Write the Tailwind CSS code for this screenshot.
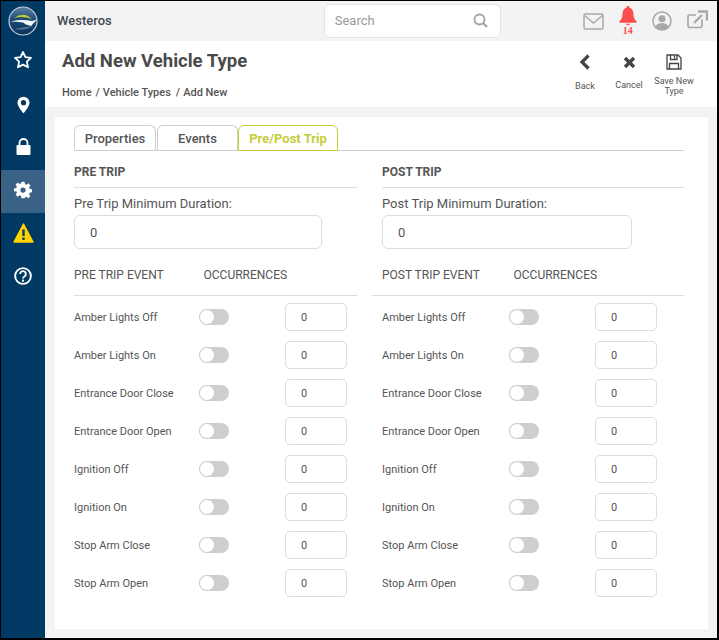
<!DOCTYPE html>
<html><head><meta charset="utf-8"><script src="https://cdn.jsdelivr.net/npm/@tailwindcss/browser@4"></script></head>
<body class="m-0 bg-black">
<div class="w-[719px] h-[640px] overflow-hidden pt-px pl-px pr-[2px] pb-[2px] bg-black font-['Roboto',sans-serif] text-[#555]">
<div class="flex h-full bg-[#f3f3f3]">
<aside class="w-[44px] shrink-0 bg-[#003963] flex flex-col items-center">
  <div class="h-[40px] w-full flex items-center justify-center">
    <svg width="30" height="30" viewBox="0 0 30 30"><defs><linearGradient id="g" x1="0" y1="0" x2="0" y2="1"><stop offset="0" stop-color="#5f83a3"/><stop offset=".45" stop-color="#1c4a74"/><stop offset="1" stop-color="#0b3158"/></linearGradient></defs><circle cx="15" cy="15" r="14" fill="url(#g)" stroke="#c3ced8" stroke-width="1.200"/><path d="M6 12Q16 5 24 13Q15 9.500 6 12Z" fill="#c3c93a"/><path d="M2.500 15.500Q14 13 24 15L29 13.500L23 20L18 18.500L15 16.500Q9 15.500 2.500 15.500Z" fill="#f4f7fa"/><path d="M6 23Q16 25 25 20Q16 21.500 6 23Z" fill="#5d7f9e"/></svg>
  </div>
  <div class="h-[38px] w-full flex items-center justify-center">
    <svg width="20" height="20" viewBox="0 0 20 20"><path d="M10 2l2.400 5.200 5.600.7-4.100 3.800 1.100 5.600L10 14.600l-5 2.700 1.100-5.600L2 7.900l5.600-.7z" fill="none" stroke="#fff" stroke-width="1.800" stroke-linejoin="round"/></svg>
  </div>
  <div class="h-[50px] w-full flex items-center justify-center">
    <svg class="mt-[1px]" width="13" height="18" viewBox="0 0 14 18"><path fill-rule="evenodd" d="M7 0a6.500 6.500 0 0 1 6.500 6.500C13.500 10.500 7 18 7 18S.5 10.500.5 6.500A6.500 6.500 0 0 1 7 0zm0 3.700a2.800 2.800 0 1 0 0 5.600A2.800 2.800 0 0 0 7 3.700z" fill="#fff"/></svg>
  </div>
  <div class="h-[36px] w-full flex items-center justify-center">
    <svg class="mb-[1px]" width="15" height="17" viewBox="0 0 15 17"><path d="M3.500 8V5a4 4 0 0 1 8 0V8" fill="none" stroke="#fff" stroke-width="1.800"/><rect x="0.500" y="7" width="14" height="10" rx="1" fill="#fff"/></svg>
  </div>
  <div class="h-[43px] w-full mt-[5px] shrink-0 bg-[#3a6286] flex items-center justify-center">
    <svg class="mb-[3px]" width="18" height="18" viewBox="0 0 24 24"><path fill="#fff" fill-rule="evenodd" d="M10 1h4l.6 3.100 1.900.8 2.600-1.800 2.800 2.800-1.800 2.600.8 1.900 3.100.6v4l-3.100.6-.8 1.900 1.800 2.600-2.800 2.800-2.600-1.800-1.900.8L14 23h-4l-.6-3.100-1.900-.8-2.600 1.800-2.800-2.800 1.800-2.600-.8-1.900L0 14v-4l3.100-.6.8-1.900L2.100 4.900l2.800-2.800 2.600 1.800 1.900-.8zM12 8.500a3.500 3.500 0 1 0 0 7 3.500 3.500 0 0 0 0-7z"/></svg>
  </div>
  <div class="h-[42px] w-full flex items-center justify-center">
    <svg class="mb-[2px]" width="21" height="20" viewBox="0 0 21 20"><path d="M10.500 1L20 19H1Z" fill="#ffd200" stroke="#ffd200" stroke-width="1.400" stroke-linejoin="round"/><rect x="9.300" y="6.500" width="2.400" height="6.500" fill="#003963"/><rect x="9.300" y="14.500" width="2.400" height="2.400" fill="#003963"/></svg>
  </div>
  <div class="h-[42px] w-full flex items-center justify-center">
    <svg width="18" height="18" viewBox="0 0 19 19"><circle cx="9.500" cy="9.500" r="8.300" fill="none" stroke="#fff" stroke-width="2"/><path d="M6.500 7.400a3 3 0 1 1 4.500 2.600c-1 .6-1.500 1-1.500 2.200" fill="none" stroke="#fff" stroke-width="2"/><rect x="8.400" y="13.300" width="2.200" height="2.200" fill="#fff"/></svg>
  </div>
</aside>
<div class="flex-1 min-w-0 flex flex-col">
  <header class="h-[40px] shrink-0 flex items-center pl-[12px] relative">
    <span class="text-[13px] font-medium text-[#3f4650]">Westeros</span>
    <div class="ml-[212px] mt-[-1px] w-[177px] h-[34px] bg-white border border-[#e3e3e3] rounded-[6px] flex items-center justify-between pl-[10px] pr-[12px]">
      <span class="text-[13px] text-[#9a9a9a]">Search</span>
      <svg width="15" height="15" viewBox="0 0 15 15"><circle cx="6.500" cy="6.500" r="5" fill="none" stroke="#a3a3a3" stroke-width="1.800"/><path d="M10.200 10.200L14 14" stroke="#a3a3a3" stroke-width="2.200"/></svg>
    </div>
    <div class="ml-[82px] flex items-center">
      <svg width="21" height="17" viewBox="0 0 21 17"><rect x="1" y="1" width="19" height="15" rx="1.500" fill="none" stroke="#a8a8a8" stroke-width="1.500"/><path d="M1.500 2.500L10.500 10L19.500 2.500" fill="none" stroke="#a8a8a8" stroke-width="1.500"/></svg>
      <div class="ml-[14px] w-[20px] h-[31px] relative">
        <svg class="absolute left-0 top-0" width="20" height="19" viewBox="0 0 20 21"><path d="M10 0a1.600 1.600 0 0 1 1.600 1.800C14.500 2.600 16 5 16 8c0 5 1.500 7 3.500 9v1.500H.5V17c2-2 3.500-4 3.500-9 0-3 1.500-5.400 4.400-6.200A1.600 1.600 0 0 1 10 0zM7.500 19.500h5a2.500 1.500 0 0 1-5 0z" fill="#ff4d4d"/></svg>
        <span class="absolute left-0 right-0 top-[20px] text-center font-['Liberation_Serif',serif] font-bold text-[10px] leading-[10px] text-[#ff4d4d]">14</span>
      </div>
      <svg class="ml-[14px]" width="20" height="20" viewBox="0 0 20 20"><circle cx="10" cy="10" r="9" fill="none" stroke="#a8a8a8" stroke-width="1.500"/><circle cx="10" cy="7.700" r="3.500" fill="#a8a8a8"/><path d="M3.500 15.500C5 12.500 7.500 12 10 12s5 .5 6.500 3.500A9 9 0 0 1 10 19a9 9 0 0 1-6.500-3.500z" fill="#a8a8a8"/></svg>
      <svg class="ml-[15px] mt-[-3px]" width="21" height="19" viewBox="0 0 21 19"><path d="M15 9.500V16a1.500 1.500 0 0 1-1.500 1.500H2.500A1.500 1.500 0 0 1 1 16V6.500A1.500 1.500 0 0 1 2.500 5H9" fill="none" stroke="#a8a8a8" stroke-width="1.700"/><path d="M7 13L15 5M11 1.500H20V10.500" fill="none" stroke="#a8a8a8" stroke-width="2.400"/></svg>
    </div>
  </header>
  <section class="h-[66px] shrink-0 bg-white flex justify-between pl-[17px] pr-[20px]">
    <div>
      <h1 class="text-[18.500px] leading-[24px] font-bold mt-[8px] text-[#4a4a4a]">Add New Vehicle Type</h1>
      <div class="text-[11px] font-medium leading-[14px] mt-[13px] text-[#555] flex"><span>Home</span><span class="ml-[4px]">/</span><span class="ml-[3px]">Vehicle Types</span><span class="ml-[5px]">/</span><span class="ml-[3px]">Add New</span></div>
    </div>
    <div class="flex items-start text-[9px] leading-[10px] text-center text-[#555]">
      <div class="w-[44px] flex flex-col items-center">
        <svg class="mt-[13px]" width="12" height="16" viewBox="0 0 12 16"><path d="M9.500 1.500L3 8L9.500 14.500" fill="none" stroke="#444" stroke-width="3.200"/></svg>
        <span class="mt-[11px]">Back</span>
      </div>
      <div class="w-[44px] flex flex-col items-center">
        <svg class="mt-[15px]" width="13" height="13" viewBox="0 0 13 13"><path d="M2 2L11 11M11 2L2 11" fill="none" stroke="#444" stroke-width="3.400"/></svg>
        <span class="mt-[11px]">Cancel</span>
      </div>
      <div class="w-[46px] flex flex-col items-center">
        <svg class="mt-[13px]" width="16" height="16" viewBox="0 0 16 16"><path d="M1 1H12L15 4V15H1Z" fill="none" stroke="#444" stroke-width="1.300"/><path d="M4.500 1V5.500H11V1M8.500 2V4.500" fill="none" stroke="#444" stroke-width="1.300"/><path d="M3.500 15V9.500H12.500V15" fill="none" stroke="#444" stroke-width="1.300"/></svg>
        <span class="mt-[6px]">Save New<br>Type</span>
      </div>
    </div>
  </section>
  <main class="flex-1 pt-[10px] pl-[10px] pr-[9px] pb-[8px]">
    <div class="h-[512px] bg-white pt-[8px] pl-[19px] pr-[24px]">
      <nav class="flex h-[26px] border-b border-[#cfcfcf] text-[13px] leading-[26px]">
        <div class="w-[82px] h-[26px] text-center border border-b-0 border-[#cfcfcf] rounded-t-[6px] font-medium text-[#555]">Properties</div>
        <div class="ml-px w-[81px] h-[26px] text-center border border-b-0 border-[#cfcfcf] rounded-t-[6px] font-medium text-[#555]">Events</div>
        <div class="w-[100px] h-[26px] text-center border border-[#c6cc3a] border-b-[#c6cc3a] rounded-t-[6px] font-bold text-[#c6cc3a] bg-white">Pre/Post Trip</div>
      </nav>
      <div class="flex">
        <div class="w-[283px]">
          <h2 class="h-[37px] border-b border-[#dcdcdc] text-[12px] leading-[42px] font-bold">PRE TRIP</h2>
          <div class="text-[13px] leading-[16px] mt-[8px]">Pre Trip Minimum Duration:</div>
          <div class="mt-[3px] w-[248px] h-[34px] border border-[#dcdcdc] rounded-[6px] pl-[15px] text-[13px] leading-[33px]">0</div>
          <div class="mt-[11px] h-[36px] border-b border-[#dcdcdc] flex text-[12px] leading-[30px]"><span class="w-[129.500px]">PRE TRIP EVENT</span><span>OCCURRENCES</span></div>
          <div class="mt-[7px] flex flex-col gap-[10px] text-[11px] leading-[14px]">
            <div class="flex items-center h-[28px]"><span class="w-[125px] mt-[1px]">Amber Lights Off</span><span class="w-[30px] h-[16px] rounded-full bg-[#cecece] relative"><span class="absolute left-0 top-0 w-[16px] h-[16px] rounded-full bg-white border border-[#cecece]"></span></span><span class="ml-[56px] w-[62px] h-[28px] border border-[#dcdcdc] rounded-[5px] pl-[15px] leading-[28px]">0</span></div>
            <div class="flex items-center h-[28px]"><span class="w-[125px] mt-[1px]">Amber Lights On</span><span class="w-[30px] h-[16px] rounded-full bg-[#cecece] relative"><span class="absolute left-0 top-0 w-[16px] h-[16px] rounded-full bg-white border border-[#cecece]"></span></span><span class="ml-[56px] w-[62px] h-[28px] border border-[#dcdcdc] rounded-[5px] pl-[15px] leading-[28px]">0</span></div>
            <div class="flex items-center h-[28px]"><span class="w-[125px] mt-[1px]">Entrance Door Close</span><span class="w-[30px] h-[16px] rounded-full bg-[#cecece] relative"><span class="absolute left-0 top-0 w-[16px] h-[16px] rounded-full bg-white border border-[#cecece]"></span></span><span class="ml-[56px] w-[62px] h-[28px] border border-[#dcdcdc] rounded-[5px] pl-[15px] leading-[28px]">0</span></div>
            <div class="flex items-center h-[28px]"><span class="w-[125px] mt-[1px]">Entrance Door Open</span><span class="w-[30px] h-[16px] rounded-full bg-[#cecece] relative"><span class="absolute left-0 top-0 w-[16px] h-[16px] rounded-full bg-white border border-[#cecece]"></span></span><span class="ml-[56px] w-[62px] h-[28px] border border-[#dcdcdc] rounded-[5px] pl-[15px] leading-[28px]">0</span></div>
            <div class="flex items-center h-[28px]"><span class="w-[125px] mt-[1px]">Ignition Off</span><span class="w-[30px] h-[16px] rounded-full bg-[#cecece] relative"><span class="absolute left-0 top-0 w-[16px] h-[16px] rounded-full bg-white border border-[#cecece]"></span></span><span class="ml-[56px] w-[62px] h-[28px] border border-[#dcdcdc] rounded-[5px] pl-[15px] leading-[28px]">0</span></div>
            <div class="flex items-center h-[28px]"><span class="w-[125px] mt-[1px]">Ignition On</span><span class="w-[30px] h-[16px] rounded-full bg-[#cecece] relative"><span class="absolute left-0 top-0 w-[16px] h-[16px] rounded-full bg-white border border-[#cecece]"></span></span><span class="ml-[56px] w-[62px] h-[28px] border border-[#dcdcdc] rounded-[5px] pl-[15px] leading-[28px]">0</span></div>
            <div class="flex items-center h-[28px]"><span class="w-[125px] mt-[1px]">Stop Arm Close</span><span class="w-[30px] h-[16px] rounded-full bg-[#cecece] relative"><span class="absolute left-0 top-0 w-[16px] h-[16px] rounded-full bg-white border border-[#cecece]"></span></span><span class="ml-[56px] w-[62px] h-[28px] border border-[#dcdcdc] rounded-[5px] pl-[15px] leading-[28px]">0</span></div>
            <div class="flex items-center h-[28px]"><span class="w-[125px] mt-[1px]">Stop Arm Open</span><span class="w-[30px] h-[16px] rounded-full bg-[#cecece] relative"><span class="absolute left-0 top-0 w-[16px] h-[16px] rounded-full bg-white border border-[#cecece]"></span></span><span class="ml-[56px] w-[62px] h-[28px] border border-[#dcdcdc] rounded-[5px] pl-[15px] leading-[28px]">0</span></div>
          </div>
        </div>
        <div class="ml-[15px] w-[312px]">
          <h2 class="ml-[10px] h-[37px] border-b border-[#dcdcdc] text-[12px] leading-[42px] font-bold">POST TRIP</h2>
          <div class="ml-[10px] text-[13px] leading-[16px] mt-[8px]">Post Trip Minimum Duration:</div>
          <div class="ml-[10px] mt-[3px] w-[250px] h-[34px] border border-[#dcdcdc] rounded-[6px] pl-[15px] text-[13px] leading-[33px]">0</div>
          <div class="mt-[11px] h-[36px] border-b border-[#dcdcdc] flex pl-[10px] text-[12px] leading-[30px]"><span class="w-[131.500px]">POST TRIP EVENT</span><span>OCCURRENCES</span></div>
          <div class="mt-[7px] pl-[10px] flex flex-col gap-[10px] text-[11px] leading-[14px]">
            <div class="flex items-center h-[28px]"><span class="w-[127px] mt-[1px]">Amber Lights Off</span><span class="w-[30px] h-[16px] rounded-full bg-[#cecece] relative"><span class="absolute left-0 top-0 w-[16px] h-[16px] rounded-full bg-white border border-[#cecece]"></span></span><span class="ml-[56px] w-[62px] h-[28px] border border-[#dcdcdc] rounded-[5px] pl-[15px] leading-[28px]">0</span></div>
            <div class="flex items-center h-[28px]"><span class="w-[127px] mt-[1px]">Amber Lights On</span><span class="w-[30px] h-[16px] rounded-full bg-[#cecece] relative"><span class="absolute left-0 top-0 w-[16px] h-[16px] rounded-full bg-white border border-[#cecece]"></span></span><span class="ml-[56px] w-[62px] h-[28px] border border-[#dcdcdc] rounded-[5px] pl-[15px] leading-[28px]">0</span></div>
            <div class="flex items-center h-[28px]"><span class="w-[127px] mt-[1px]">Entrance Door Close</span><span class="w-[30px] h-[16px] rounded-full bg-[#cecece] relative"><span class="absolute left-0 top-0 w-[16px] h-[16px] rounded-full bg-white border border-[#cecece]"></span></span><span class="ml-[56px] w-[62px] h-[28px] border border-[#dcdcdc] rounded-[5px] pl-[15px] leading-[28px]">0</span></div>
            <div class="flex items-center h-[28px]"><span class="w-[127px] mt-[1px]">Entrance Door Open</span><span class="w-[30px] h-[16px] rounded-full bg-[#cecece] relative"><span class="absolute left-0 top-0 w-[16px] h-[16px] rounded-full bg-white border border-[#cecece]"></span></span><span class="ml-[56px] w-[62px] h-[28px] border border-[#dcdcdc] rounded-[5px] pl-[15px] leading-[28px]">0</span></div>
            <div class="flex items-center h-[28px]"><span class="w-[127px] mt-[1px]">Ignition Off</span><span class="w-[30px] h-[16px] rounded-full bg-[#cecece] relative"><span class="absolute left-0 top-0 w-[16px] h-[16px] rounded-full bg-white border border-[#cecece]"></span></span><span class="ml-[56px] w-[62px] h-[28px] border border-[#dcdcdc] rounded-[5px] pl-[15px] leading-[28px]">0</span></div>
            <div class="flex items-center h-[28px]"><span class="w-[127px] mt-[1px]">Ignition On</span><span class="w-[30px] h-[16px] rounded-full bg-[#cecece] relative"><span class="absolute left-0 top-0 w-[16px] h-[16px] rounded-full bg-white border border-[#cecece]"></span></span><span class="ml-[56px] w-[62px] h-[28px] border border-[#dcdcdc] rounded-[5px] pl-[15px] leading-[28px]">0</span></div>
            <div class="flex items-center h-[28px]"><span class="w-[127px] mt-[1px]">Stop Arm Close</span><span class="w-[30px] h-[16px] rounded-full bg-[#cecece] relative"><span class="absolute left-0 top-0 w-[16px] h-[16px] rounded-full bg-white border border-[#cecece]"></span></span><span class="ml-[56px] w-[62px] h-[28px] border border-[#dcdcdc] rounded-[5px] pl-[15px] leading-[28px]">0</span></div>
            <div class="flex items-center h-[28px]"><span class="w-[127px] mt-[1px]">Stop Arm Open</span><span class="w-[30px] h-[16px] rounded-full bg-[#cecece] relative"><span class="absolute left-0 top-0 w-[16px] h-[16px] rounded-full bg-white border border-[#cecece]"></span></span><span class="ml-[56px] w-[62px] h-[28px] border border-[#dcdcdc] rounded-[5px] pl-[15px] leading-[28px]">0</span></div>
          </div>
        </div>
      </div>
    </div>
  </main>
</div>
</div>
</div>
</body></html>
